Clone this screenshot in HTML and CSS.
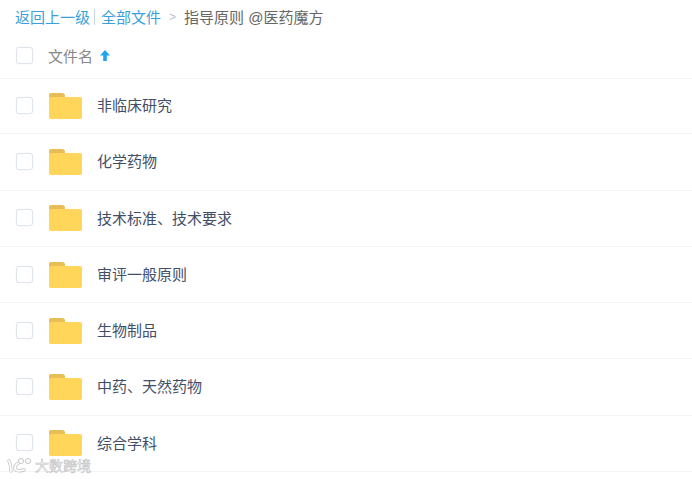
FILE: index.html
```html
<!DOCTYPE html>
<html lang="zh-CN">
<head>
  <meta charset="UTF-8">
  <meta name="viewport" content="width=device-width, initial-scale=1.0">
  <title>指导原则 @医药魔方</title>
  <link rel="stylesheet" href="styles.css">
</head>
<body>
  <div class="crumbs">
    <a href="#">返回上一级</a>
    <span class="pipe"></span>
    <a href="#">全部文件</a>
    <span class="gt">&gt;</span>
    <span class="current">指导原则 @医药魔方</span>
  </div>

  <div class="list-head">
    <span class="check"></span>
    <span class="head-name">文件名</span>
    <svg class="sort" width="10" height="11" viewBox="0 0 10 11"><path d="M5 0 L10 5.5 H6.8 V11 H3.2 V5.5 H0 Z" fill="#1ea5f0"/></svg>
  </div>

  <ul class="files">
    <li class="file"><span class="check"></span><svg class="folder" width="33" height="27" viewBox="0 0 33 27"><path d="M0 3a2 2 0 0 1 2-2h11a3 3 0 0 1 3 3v2H0z" fill="#e9bd56"/><rect y="5" width="33" height="22" rx="2" fill="#ffd659"/></svg><span class="name">非临床研究</span></li>
    <li class="file"><span class="check"></span><svg class="folder" width="33" height="27" viewBox="0 0 33 27"><path d="M0 3a2 2 0 0 1 2-2h11a3 3 0 0 1 3 3v2H0z" fill="#e9bd56"/><rect y="5" width="33" height="22" rx="2" fill="#ffd659"/></svg><span class="name">化学药物</span></li>
    <li class="file"><span class="check"></span><svg class="folder" width="33" height="27" viewBox="0 0 33 27"><path d="M0 3a2 2 0 0 1 2-2h11a3 3 0 0 1 3 3v2H0z" fill="#e9bd56"/><rect y="5" width="33" height="22" rx="2" fill="#ffd659"/></svg><span class="name">技术标准、技术要求</span></li>
    <li class="file"><span class="check"></span><svg class="folder" width="33" height="27" viewBox="0 0 33 27"><path d="M0 3a2 2 0 0 1 2-2h11a3 3 0 0 1 3 3v2H0z" fill="#e9bd56"/><rect y="5" width="33" height="22" rx="2" fill="#ffd659"/></svg><span class="name">审评一般原则</span></li>
    <li class="file"><span class="check"></span><svg class="folder" width="33" height="27" viewBox="0 0 33 27"><path d="M0 3a2 2 0 0 1 2-2h11a3 3 0 0 1 3 3v2H0z" fill="#e9bd56"/><rect y="5" width="33" height="22" rx="2" fill="#ffd659"/></svg><span class="name">生物制品</span></li>
    <li class="file"><span class="check"></span><svg class="folder" width="33" height="27" viewBox="0 0 33 27"><path d="M0 3a2 2 0 0 1 2-2h11a3 3 0 0 1 3 3v2H0z" fill="#e9bd56"/><rect y="5" width="33" height="22" rx="2" fill="#ffd659"/></svg><span class="name">中药、天然药物</span></li>
    <li class="file"><span class="check"></span><svg class="folder" width="33" height="27" viewBox="0 0 33 27"><path d="M0 3a2 2 0 0 1 2-2h11a3 3 0 0 1 3 3v2H0z" fill="#e9bd56"/><rect y="5" width="33" height="22" rx="2" fill="#ffd659"/></svg><span class="name">综合学科</span></li>
  </ul>

  <div class="mark">
    <svg width="28" height="18" viewBox="0 0 28 18" fill="none" stroke-linecap="round">
      <g stroke="#c8c8c8" stroke-width="3.4">
        <path d="M2 5 Q4 9 4 15"/>
        <path d="M13 6 Q7 9 8 13 Q10 16 17 14"/>
      </g>
      <g stroke="#fff" stroke-width="1.8">
        <path d="M2 5 Q4 9 4 15"/>
        <path d="M13 6 Q7 9 8 13 Q10 16 17 14"/>
      </g>
      <circle cx="14" cy="5" r="2.6" fill="#fff" stroke="#c8c8c8"/>
      <circle cx="21" cy="5" r="2.6" fill="#fff" stroke="#c8c8c8"/>
    </svg>
    <span class="mark-text">大数跨境</span>
  </div>
</body>
</html>
```

FILE: styles.css
```css
body {
  font-family: "Liberation Sans", "Noto Sans CJK SC", sans-serif;
  font-size: 15px;
  background-color: #fff;
  color: #424e67;
  margin: 0;
  overflow: hidden;
}
.crumbs {
  display: flex;
  align-items: center;
  height: 33px;
  padding-left: 15px;
}
.crumbs a {
  color: #3b9fdc;
  text-decoration: none;
}
.pipe {
  width: 1px;
  height: 16px;
  background: #c4d8e6;
  margin: 1px 6px 0 4px;
}
.gt {
  color: #b8c2cc;
  margin: 0 8px;
  font-size: 12px;
}
.current {
  color: #666;
}
.list-head {
  display: flex;
  align-items: center;
  height: 46px;
  padding-left: 16px;
  border-bottom: 1px solid #f3f4f6;
  box-sizing: border-box;
}
.head-name {
  color: #888;
  margin-left: 15px;
}
.sort {
  margin-left: 7px;
  margin-top: -1px;
}
.check {
  width: 15px;
  height: 15px;
  border: 1px solid #dfe3ea;
  box-shadow: 0 0 1px #d5d9e2;
  border-radius: 3px;
  flex-shrink: 0;
}
.files {
  list-style: none;
  margin: 0;
  padding: 0;
}
.file {
  display: flex;
  align-items: center;
  height: 56.25px;
  box-sizing: border-box;
  padding-left: 16px;
  padding-bottom: 2px;
  border-bottom: 1px solid #f3f4f6;
}
.file:first-child {
  height: 55.49px;
}
.file .check {
  margin-top: 1px;
}
.folder {
  margin-left: 16px;
  margin-top: 1px;
}
.name {
  margin-left: 15px;
  margin-top: -0.5px;
  color: #424e67;
}
.mark {
  position: absolute;
  left: 7px;
  top: 455px;
  display: flex;
  align-items: center;
}
.mark-text {
  color: #fff;
  font-size: 14px;
  -webkit-text-stroke: 0.6px #c4c4c4;
}
```
